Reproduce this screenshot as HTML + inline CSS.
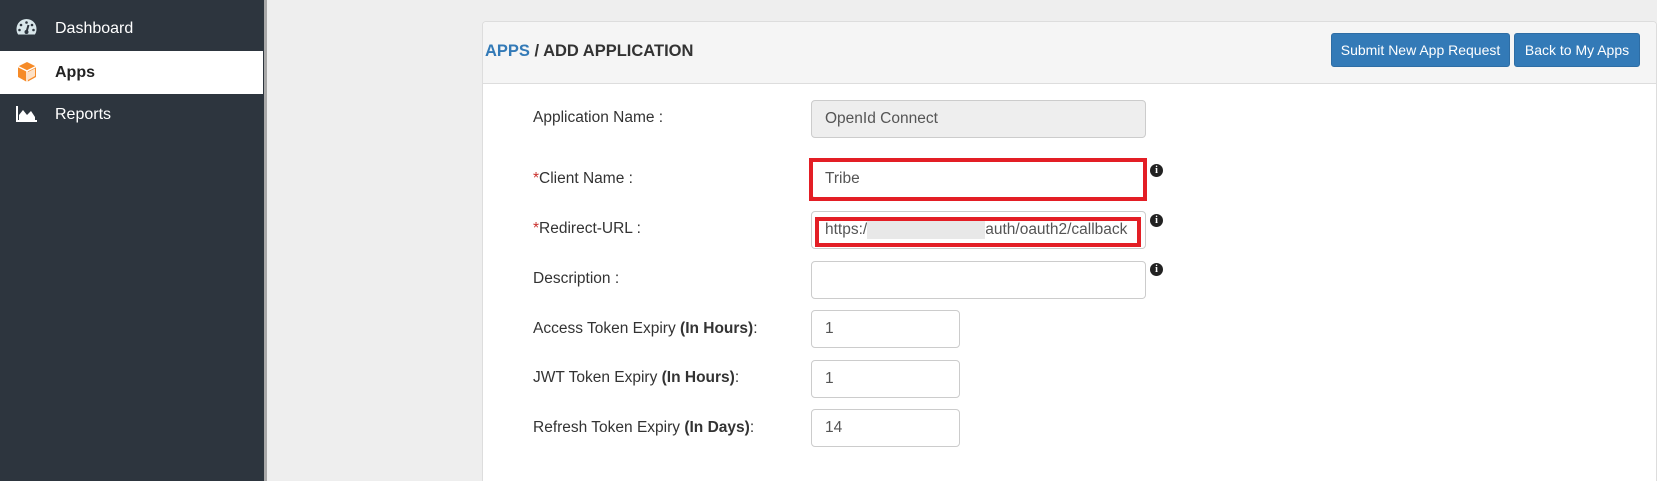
<!DOCTYPE html>
<html><head><meta charset="utf-8"><style>
*{box-sizing:border-box;margin:0;padding:0}
html,body{width:1657px;height:481px;overflow:hidden}
body{background:#eeeeee;font-family:"Liberation Sans",Arial,sans-serif;position:relative}
.side{position:absolute;left:0;top:0;width:264px;height:481px;background:#2d353e}
.sb{position:absolute;left:264px;top:0;width:3px;height:481px;background:#a8a8a8}
.item{position:absolute;left:0;width:263px;height:43px;color:#fff;font-size:16px;line-height:43px}
.item span{position:absolute;left:55px}
.item svg{position:absolute;left:16px;top:11px}
.panel{position:absolute;left:482px;top:21px;width:1175px;height:460px;background:#fff;border:1px solid #ddd;border-bottom:none;border-radius:4px 4px 0 0}
.head{height:62px;background:#f5f5f5;border-bottom:1px solid #ddd;border-radius:4px 4px 0 0;position:relative}
.title{position:absolute;left:2px;top:20px;font-size:16.5px;font-weight:bold;color:#333}
.title b{color:#337ab7}
.btn{position:absolute;top:11px;height:34px;background:#337ab7;border:1px solid #2e6da4;border-radius:3px;color:#fff;font-size:14px;line-height:32px;text-align:center}
.lbl{position:absolute;left:533px;font-size:15.5px;color:#333;transform:translateY(-50%)}
.lbl .r{color:#c9302c}
.inp{position:absolute;left:811px;height:38px;border:1px solid #ccc;border-radius:4px;background:#fff;font-size:15.5px;color:#555;padding-left:13px;line-height:36px}
.info{position:absolute;left:1150px;width:13px;height:13px;border-radius:50%;background:#222;color:#fff;font-size:10px;font-weight:bold;text-align:center;line-height:13px;font-family:"Liberation Serif",serif}
.red{position:absolute;border:4px solid #e31e25}
</style></head><body>
<div class="side">
 <div class="item" style="top:7px"><svg width="21" height="18" viewBox="0 0 21 18"><path d="M10.5 1A10 10 0 0 0 .5 11c0 2 .6 4 1.6 5.5h16.8A10 10 0 0 0 20.5 11 10 10 0 0 0 10.5 1z" fill="#d8e6ea"/><circle cx="10.5" cy="4.5" r="1.3" fill="#2d353e"/><circle cx="5" cy="7" r="1.3" fill="#2d353e"/><circle cx="16" cy="7" r="1.3" fill="#2d353e"/><circle cx="3.5" cy="12" r="1.3" fill="#2d353e"/><circle cx="17.5" cy="12" r="1.3" fill="#2d353e"/><path d="M10.5 14 L12.5 7" stroke="#2d353e" stroke-width="2"/><circle cx="10.5" cy="14" r="2" fill="#2d353e"/></svg><span>Dashboard</span></div>
 <div class="item" style="top:51px;background:#fff;color:#222;font-weight:bold"><svg width="22" height="22" viewBox="0 0 22 22" style="top:10px"><path d="M11 1L20 5.5V16L11 21L2 16V5.5Z" fill="#f68b28"/><path d="M11 10L20 5.5M11 10L2 5.5M11 10V21" stroke="#fff" stroke-width="1.5"/><path d="M12 11L19 7.5V15L12 19Z" fill="#fde1c6"/></svg><span>Apps</span></div>
 <div class="item" style="top:93px"><svg width="21" height="16" viewBox="0 0 21 16" style="top:13px"><path d="M1 0V15H21" stroke="#fff" stroke-width="2" fill="none"/><path d="M3 14V9L7 4L11 9L15 5L19 11V14Z" fill="#fff"/></svg><span>Reports</span></div>
</div>
<div class="sb"></div>
<div class="panel">
 <div class="head">
  <div class="title"><b>APPS</b> / ADD APPLICATION</div>
  <div class="btn" style="left:848px;width:179px">Submit New App Request</div>
  <div class="btn" style="left:1031px;width:126px">Back to My Apps</div>
 </div>
</div>
<div class="lbl" style="top:118px">Application Name :</div>
<div class="inp" style="top:100px;width:335px;background:#eee">OpenId Connect</div>
<div class="lbl" style="top:179px"><span class="r">*</span>Client Name :</div>
<div class="inp" style="top:160px;width:335px">Tribe</div>
<div class="red" style="left:809px;top:158px;width:338px;height:43px"></div>
<div class="info" style="top:164px">i</div>
<div class="lbl" style="top:229px"><span class="r">*</span>Redirect-URL :</div>
<div class="inp" style="top:211px;width:335px;padding-left:13px">https:/<span style="display:inline-block;width:118px;height:18px;background:#e8e8e8;vertical-align:middle"></span>auth/oauth2/callback</div>
<div class="red" style="left:815px;top:217px;width:326px;height:30px"></div>
<div class="info" style="top:214px">i</div>
<div class="lbl" style="top:279px">Description :</div>
<div class="inp" style="top:261px;width:335px"></div>
<div class="info" style="top:263px">i</div>
<div class="lbl" style="top:329px">Access Token Expiry <b>(In Hours)</b>:</div>
<div class="inp" style="top:310px;width:149px">1</div>
<div class="lbl" style="top:378px">JWT Token Expiry <b>(In Hours)</b>:</div>
<div class="inp" style="top:360px;width:149px">1</div>
<div class="lbl" style="top:428px">Refresh Token Expiry <b>(In Days)</b>:</div>
<div class="inp" style="top:409px;width:149px">14</div>
</body></html>
